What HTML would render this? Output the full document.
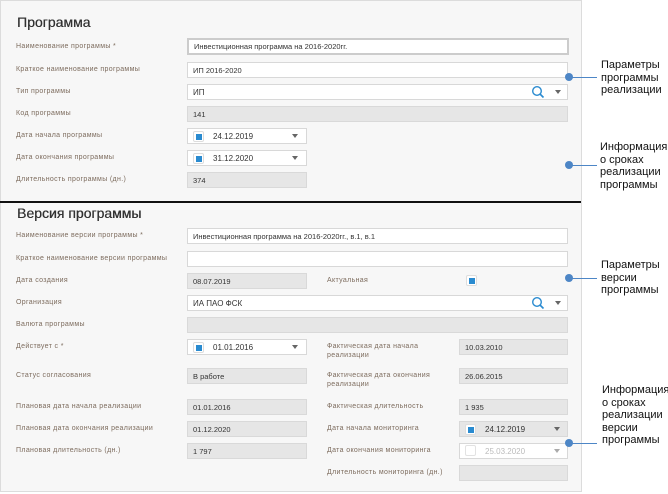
<!DOCTYPE html>
<html><head><meta charset="utf-8"><style>
*{margin:0;padding:0;box-sizing:border-box}
body{width:668px;height:494px;background:#fff;font-family:"Liberation Sans",sans-serif;position:relative;overflow:hidden}
#p{position:absolute;left:0;top:0;width:582px;height:492px;background:#f7f7f7;border:1px solid #dcdcdc}
.a{position:absolute}
.h{font-size:14px;color:#333;left:17px;text-shadow:0.3px 0 0 #333}
.l{font-size:7px;color:#7d6c5e;letter-spacing:.35px;line-height:9px}
.i{height:16px;background:#fff;border:1px solid #d8d8d8;font-size:7.5px;color:#333;padding:3px 0 0 5px;line-height:9px}
.g{background:#e6e6e6;border-color:#d9d9d9}
.d{height:16px;background:#fff;border:1px solid #d8d8d8}
.d .cb{position:absolute;left:5px;top:2px;width:11px;height:11px;border:1px solid #ddd;border-radius:2px;background:#fff}
.d .cb::after{content:"";position:absolute;left:1.5px;top:1.5px;width:6px;height:6px;background:#2a8bd0}
.d .t{position:absolute;left:25px;top:3px;font-size:8px;color:#333}
.ar{position:absolute;width:0;height:0;border-left:3px solid transparent;border-right:3px solid transparent;border-top:4px solid #666}
.dot{position:absolute;width:8px;height:8px;border-radius:50%;background:#4d86c6}
.ln{position:absolute;height:1px;background:#4d86c6;width:25px}
.n{position:absolute;font-size:11px;color:#111;line-height:12.5px;left:600px}
</style></head><body>
<div id="p"></div>
<div class="a" style="left:0;top:201px;width:581px;height:2px;background:#111"></div>

<div class="a h" style="top:14px">Программа</div>
<div class="a l" style="left:16px;top:42px">Наименование программы *</div>
<div class="a i" style="left:187px;top:38px;width:382px;height:17px;border:2px solid #ccc;padding-top:2px">Инвестиционная программа на 2016-2020гг.</div>
<div class="a l" style="left:16px;top:65px">Краткое наименование программы</div>
<div class="a i" style="left:187px;top:62px;width:381px">ИП 2016-2020</div>
<div class="a l" style="left:16px;top:87px">Тип программы</div>
<div class="a i" style="left:187px;top:84px;width:381px;font-size:8px">ИП</div>
<svg class="a" style="left:531px;top:85px" width="14" height="14"><circle cx="6" cy="6" r="4.3" fill="none" stroke="#2a8bd0" stroke-width="1.4"/><line x1="9" y1="9" x2="12.5" y2="12.5" stroke="#2a8bd0" stroke-width="1.6"/></svg>
<div class="ar" style="left:555px;top:90px"></div>
<div class="a l" style="left:16px;top:109px">Код программы</div>
<div class="a i g" style="left:187px;top:106px;width:381px">141</div>
<div class="a l" style="left:16px;top:131px">Дата начала программы</div>
<div class="a d" style="left:187px;top:128px;width:120px"><div class="cb"></div><div class="t">24.12.2019</div><div class="ar" style="left:104px;top:5px"></div></div>
<div class="a l" style="left:16px;top:153px">Дата окончания программы</div>
<div class="a d" style="left:187px;top:150px;width:120px"><div class="cb"></div><div class="t">31.12.2020</div><div class="ar" style="left:104px;top:5px"></div></div>
<div class="a l" style="left:16px;top:175px">Длительность программы (дн.)</div>
<div class="a i g" style="left:187px;top:172px;width:120px">374</div>

<div class="a h" style="top:205px">Версия программы</div>
<div class="a l" style="left:16px;top:231px">Наименование версии программы *</div>
<div class="a i" style="left:187px;top:228px;width:381px">Инвестиционная программа на 2016-2020гг., в.1, в.1</div>
<div class="a l" style="left:16px;top:254px">Краткое наименование версии программы</div>
<div class="a i" style="left:187px;top:251px;width:381px"></div>
<div class="a l" style="left:16px;top:276px">Дата создания</div>
<div class="a i g" style="left:187px;top:273px;width:120px">08.07.2019</div>
<div class="a l" style="left:327px;top:276px">Актуальная</div>
<div class="a d" style="left:466px;top:275px;width:12px;height:12px;border:none;background:none"><div class="cb" style="left:0;top:0"></div></div>
<div class="a l" style="left:16px;top:298px">Организация</div>
<div class="a i" style="left:187px;top:295px;width:381px;font-size:8px">ИА ПАО ФСК</div>
<svg class="a" style="left:531px;top:296px" width="14" height="14"><circle cx="6" cy="6" r="4.3" fill="none" stroke="#2a8bd0" stroke-width="1.4"/><line x1="9" y1="9" x2="12.5" y2="12.5" stroke="#2a8bd0" stroke-width="1.6"/></svg>
<div class="ar" style="left:555px;top:301px"></div>
<div class="a l" style="left:16px;top:320px">Валюта программы</div>
<div class="a i g" style="left:187px;top:317px;width:381px"></div>
<div class="a l" style="left:16px;top:342px">Действует с *</div>
<div class="a d" style="left:187px;top:339px;width:120px"><div class="cb"></div><div class="t">01.01.2016</div><div class="ar" style="left:104px;top:5px"></div></div>
<div class="a l" style="left:16px;top:371px">Статус согласования</div>
<div class="a i g" style="left:187px;top:368px;width:120px">В работе</div>
<div class="a l" style="left:16px;top:402px">Плановая дата начала реализации</div>
<div class="a i g" style="left:187px;top:399px;width:120px">01.01.2016</div>
<div class="a l" style="left:16px;top:424px">Плановая дата окончания реализации</div>
<div class="a i g" style="left:187px;top:421px;width:120px">01.12.2020</div>
<div class="a l" style="left:16px;top:446px">Плановая длительность (дн.)</div>
<div class="a i g" style="left:187px;top:443px;width:120px">1 797</div>

<div class="a l" style="left:327px;top:342px">Фактическая дата начала<br>реализации</div>
<div class="a i g" style="left:459px;top:339px;width:109px">10.03.2010</div>
<div class="a l" style="left:327px;top:371px">Фактическая дата окончания<br>реализации</div>
<div class="a i g" style="left:459px;top:368px;width:109px">26.06.2015</div>
<div class="a l" style="left:327px;top:402px">Фактическая длительность</div>
<div class="a i g" style="left:459px;top:399px;width:109px">1 935</div>
<div class="a l" style="left:327px;top:424px">Дата начала мониторинга</div>
<div class="a d" style="left:459px;top:421px;width:109px;background:#e6e6e6"><div class="cb"></div><div class="t">24.12.2019</div><div class="ar" style="left:94px;top:5px"></div></div>
<div class="a l" style="left:327px;top:446px">Дата окончания мониторинга</div>
<div class="a d" style="left:459px;top:443px;width:109px"><div class="t" style="color:#bbb">25.03.2020</div><div class="ar" style="left:94px;top:5px;border-top-color:#aaa"></div></div>
<div class="a" style="left:465px;top:445px;width:11px;height:11px;background:#fff;border:1px solid #e2e2e2;border-radius:2px"></div>
<div class="a l" style="left:327px;top:468px">Длительность мониторинга (дн.)</div>
<div class="a i g" style="left:459px;top:465px;width:109px"></div>

<div class="dot" style="left:565px;top:73px"></div><div class="ln" style="left:572px;top:77px"></div>
<div class="n" style="top:59px;left:601px">Параметры<br>программы<br>реализации</div>
<div class="dot" style="left:565px;top:161px"></div><div class="ln" style="left:572px;top:165px"></div>
<div class="n" style="top:141px">Информация<br>о сроках<br>реализации<br>программы</div>
<div class="dot" style="left:565px;top:274px"></div><div class="ln" style="left:572px;top:278px"></div>
<div class="n" style="top:259px;left:601px">Параметры<br>версии<br>программы</div>
<div class="dot" style="left:565px;top:439px"></div><div class="ln" style="left:572px;top:443px"></div>
<div class="n" style="top:384px;left:602px">Информация<br>о сроках<br>реализации<br>версии<br>программы</div>
</body></html>
